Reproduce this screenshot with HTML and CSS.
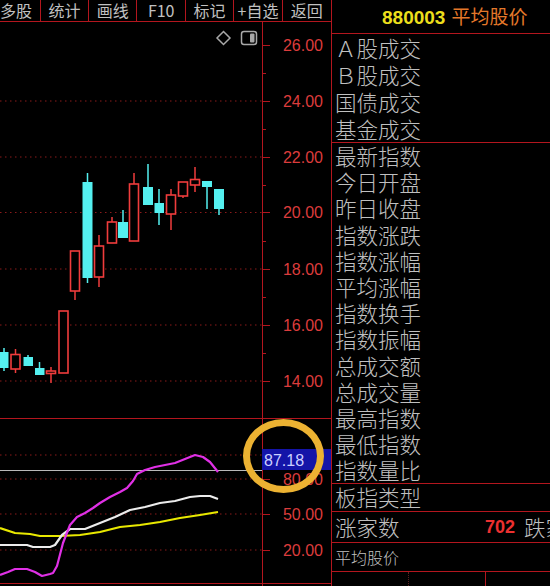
FILE: index.html
```html
<!DOCTYPE html>
<html lang="zh">
<head>
<meta charset="utf-8">
<title>880003 平均股价</title>
<link rel="stylesheet" href="styles.css">
</head>
<body>
<div class="screen">
  <div class="left">
    <div class="toolbar">
      <div class="tb">多股</div>
      <div class="tb">统计</div>
      <div class="tb">画线</div>
      <div class="tb">F10</div>
      <div class="tb">标记</div>
      <div class="tb">+自选</div>
      <div class="tb last">返回</div>
    </div>
    <div class="chart">
      <svg class="plot" width="331" height="564" viewBox="0 22 331 564" xmlns="http://www.w3.org/2000/svg">
        <g class="grid">
          <line x1="0" y1="101" x2="262" y2="101"/>
          <line x1="0" y1="157" x2="262" y2="157"/>
          <line x1="0" y1="212.5" x2="262" y2="212.5"/>
          <line x1="0" y1="269" x2="262" y2="269"/>
          <line x1="0" y1="325" x2="262" y2="325"/>
          <line x1="0" y1="381" x2="262" y2="381"/>
          <line x1="0" y1="455" x2="262" y2="455"/>
          <line x1="0" y1="479" x2="262" y2="479"/>
          <line x1="0" y1="514" x2="262" y2="514"/>
          <line x1="0" y1="550" x2="262" y2="550"/>
        </g>
        <line class="ref" x1="0" y1="470.5" x2="262" y2="470.5"/>
        <g class="frame">
          <line x1="262.5" y1="22" x2="262.5" y2="586"/>
          <line x1="0" y1="418.5" x2="331" y2="418.5"/>
          <line x1="0" y1="583.5" x2="331" y2="583.5"/>
        </g>
        <g class="frame">
          <line x1="262" y1="45.5" x2="270" y2="45.5"/>
          <line x1="262" y1="73.5" x2="266" y2="73.5"/>
          <line x1="262" y1="101.5" x2="270" y2="101.5"/>
          <line x1="262" y1="129.5" x2="266" y2="129.5"/>
          <line x1="262" y1="157.5" x2="270" y2="157.5"/>
          <line x1="262" y1="185.5" x2="266" y2="185.5"/>
          <line x1="262" y1="212.5" x2="270" y2="212.5"/>
          <line x1="262" y1="241.5" x2="266" y2="241.5"/>
          <line x1="262" y1="269.5" x2="270" y2="269.5"/>
          <line x1="262" y1="297.5" x2="266" y2="297.5"/>
          <line x1="262" y1="325.5" x2="270" y2="325.5"/>
          <line x1="262" y1="353.5" x2="266" y2="353.5"/>
          <line x1="262" y1="381.5" x2="270" y2="381.5"/>
          <line x1="262" y1="479.5" x2="270" y2="479.5"/>
          <line x1="262" y1="514.5" x2="270" y2="514.5"/>
          <line x1="262" y1="550.5" x2="270" y2="550.5"/>
        </g>
        <g class="axis">
          <text x="323" y="51">26.00</text>
          <text x="323" y="107">24.00</text>
          <text x="323" y="163">22.00</text>
          <text x="323" y="218">20.00</text>
          <text x="323" y="275">18.00</text>
          <text x="323" y="331">16.00</text>
          <text x="323" y="387">14.00</text>
          <text x="323" y="485">80.00</text>
          <text x="323" y="520">50.00</text>
          <text x="323" y="556">20.00</text>
        </g>
        <rect class="valbox" x="262" y="449" width="69" height="21"/>
        <text class="valtxt" x="264" y="465.5">87.18</text>
        <path class="icon" d="M223.5 31.5 L230 38 L223.5 44.5 L217 38 Z"/>
        <rect class="icon" x="241.5" y="31.5" width="15" height="13" rx="2.5"/>
        <rect class="iconfill" x="250" y="33.5" width="4.5" height="9" rx="1"/>
        <g class="down">
          <line x1="4" y1="348" x2="4" y2="371"/><rect x="0" y="352" width="8.5" height="16"/>
          <line x1="28" y1="355" x2="28" y2="366"/><rect x="23.5" y="357" width="9.5" height="9"/>
          <line x1="39.5" y1="362" x2="39.5" y2="375"/><rect x="35" y="368" width="9.5" height="7"/>
          <line x1="87.5" y1="173" x2="87.5" y2="283"/><rect x="82.5" y="182" width="10" height="96"/>
          <line x1="123" y1="210" x2="123" y2="238"/><rect x="118" y="222" width="10" height="16"/>
          <line x1="148" y1="164" x2="148" y2="205"/><rect x="143" y="187" width="10" height="18"/>
          <line x1="159" y1="189" x2="159" y2="225"/><rect x="154.5" y="203" width="9.5" height="10"/>
          <line x1="207" y1="181" x2="207" y2="209"/><rect x="202" y="181" width="10" height="6"/>
          <line x1="219" y1="189" x2="219" y2="215"/><rect x="214" y="189" width="10" height="20"/>
        </g>
        <g class="upw">
          <line x1="15.5" y1="349" x2="15.5" y2="354"/><line x1="15.5" y1="369" x2="15.5" y2="373"/>
          <line x1="51" y1="367" x2="51" y2="383"/>
          <line x1="75" y1="291" x2="75" y2="300"/>
          <line x1="99" y1="235" x2="99" y2="246"/><line x1="99" y1="277" x2="99" y2="287"/>
          <line x1="112" y1="217" x2="112" y2="222"/>
          <line x1="134" y1="173" x2="134" y2="184"/>
          <line x1="171" y1="189" x2="171" y2="195"/><line x1="171" y1="214" x2="171" y2="230"/>
          <line x1="183" y1="196" x2="183" y2="198"/>
          <line x1="195" y1="167" x2="195" y2="179"/><line x1="195" y1="185" x2="195" y2="192"/>
        </g>
        <g class="up">
          <rect x="11" y="354.5" width="9" height="14.5"/>
          <rect x="46.5" y="371" width="9" height="2.5"/>
          <rect x="59" y="311" width="9" height="62"/>
          <rect x="70.5" y="251" width="9" height="40"/>
          <rect x="94.5" y="246" width="9" height="31"/>
          <rect x="107.5" y="222" width="9" height="21"/>
          <rect x="129.5" y="184" width="9" height="57"/>
          <rect x="166.5" y="195" width="9" height="19"/>
          <rect x="178.5" y="182" width="9" height="14"/>
          <rect x="190.5" y="179.5" width="9" height="5.5"/>
        </g>
        <polyline class="l-yel" points="0,528 15,533 30,534 40,536 60,536 80,535 100,532 120,527 140,525 160,522 180,518 200,515 218,512"/>
        <polyline class="l-wht" points="0,545 27,545 33,547 50,547 55,545 62,535 70,529 85,529 100,523 115,517 130,510 145,507 160,503 175,501 190,497 200,496 210,496 218,499"/>
        <polyline class="l-mag" points="0,575 8,572 15,569 27,569 35,572 42,576 50,574 53,573 57,566 63,543 70,525 77,517 85,513 93,508 100,503 110,497 120,492 127,488 133,481 137,474 145,470 155,467 165,465 175,463 185,459 195,455 203,457 210,462 218,472"/>
      </svg>
    </div>
  </div>
  <div class="right">
    <div class="hdr"><span class="code">880003</span><span class="name">平均股价</span></div>
    <div class="sec s1">
      <div class="row">Ａ股成交</div>
      <div class="row">Ｂ股成交</div>
      <div class="row">国债成交</div>
      <div class="row">基金成交</div>
    </div>
    <div class="sec s2">
      <div class="row">最新指数</div>
      <div class="row">今日开盘</div>
      <div class="row">昨日收盘</div>
      <div class="row">指数涨跌</div>
      <div class="row">指数涨幅</div>
      <div class="row">平均涨幅</div>
      <div class="row">指数换手</div>
      <div class="row">指数振幅</div>
      <div class="row">总成交额</div>
      <div class="row">总成交量</div>
      <div class="row">最高指数</div>
      <div class="row">最低指数</div>
      <div class="row">指数量比</div>
    </div>
    <div class="sec s3"><div class="row">板指类型</div></div>
    <div class="sec s4"><span class="lbl">涨家数</span><span class="upn">702</span><span class="lbl">跌家数</span></div>
    <div class="sec s5">平均股价</div>
    <div class="cells"><div class="c1"></div><div class="c2"></div><div class="c3"></div></div>
  </div>
  <div class="ring"></div>
</div>
</body>
</html>
```

FILE: styles.css
```css
html, body {
  margin: 0;
  padding: 0;
  background: #000;
}
.screen {
  position: relative;
  display: flex;
  width: 550px;
  height: 586px;
  overflow: hidden;
  background: #000;
  font-family: "Noto Sans CJK SC", "Liberation Sans", sans-serif;
  color: #c0c0c0;
}
.left {
  width: 331px;
  flex: none;
  display: flex;
  flex-direction: column;
  border-right: 1px solid #b3161e;
  overflow: hidden;
}
.toolbar {
  display: flex;
  height: 21px;
  margin-left: -7.7px;
  border-bottom: 1px solid #b3161e;
  flex: none;
}
.tb {
  width: 48.4px;
  flex: none;
  box-sizing: border-box;
  border-right: 1px solid #b3161e;
  text-align: center;
  font-size: 16px;
  line-height: 21px;
  color: #c0c0c0;
  white-space: nowrap;
}
.tb.last {
  border-right: none;
}
.chart {
  flex: 1;
}
.plot {
  display: block;
}
.grid line {
  stroke: #8a1a1a;
  stroke-width: 1;
  stroke-dasharray: 1.5 3.5;
}
.ref {
  stroke: #b8b8b8;
  stroke-width: 1;
}
.frame line {
  stroke: #b3161e;
  stroke-width: 1;
}
.axis text {
  font-family: "Liberation Sans", sans-serif;
  font-size: 16px;
  fill: #dc3c3c;
  text-anchor: end;
}
.valbox {
  fill: #1414a8;
}
.valtxt {
  font-family: "Liberation Sans", sans-serif;
  font-size: 16px;
  fill: #ccd0ff;
}
.icon {
  fill: none;
  stroke: #a8a8a8;
  stroke-width: 1.5;
}
.iconfill {
  fill: #a8a8a8;
}
.down line {
  stroke: #54f0f0;
  stroke-width: 1.5;
}
.down rect {
  fill: #54f0f0;
}
.upw line {
  stroke: #f03c3c;
  stroke-width: 1.5;
}
.up rect {
  fill: #000;
  stroke: #f03c3c;
  stroke-width: 1.6;
}
.l-yel, .l-wht, .l-mag {
  fill: none;
  stroke-width: 2.2;
  stroke-linejoin: round;
}
.l-yel { stroke: #e8e800; }
.l-wht { stroke: #ececec; }
.l-mag { stroke: #e030e6; }

.right {
  flex: 1;
  display: flex;
  flex-direction: column;
}
.hdr {
  height: 33px;
  line-height: 31px;
  border-bottom: 1px solid #b3161e;
  padding-left: 50px;
  white-space: nowrap;
}
.code {
  font-family: "Liberation Sans", sans-serif;
  font-weight: bold;
  font-size: 19px;
  color: #ecdf1c;
  margin-right: 6px;
}
.name {
  font-size: 19px;
  color: #e4782a;
}
.sec {
  border-bottom: 1px solid #b3161e;
  padding-left: 3px;
  font-size: 21.5px;
  font-weight: 300;
  white-space: nowrap;
}
.s1 .row {
  height: 27px;
  line-height: 27px;
}
.s2 .row {
  height: 26.2px;
  line-height: 26.2px;
}
.s3 .row {
  height: 26.5px;
  line-height: 26.5px;
}
.s4 {
  height: 30px;
  line-height: 30px;
  display: grid;
  grid-template-columns: 150px auto auto;
  justify-content: start;
}
.upn {
  font-family: "Liberation Sans", sans-serif;
  font-weight: bold;
  font-size: 18px;
  color: #ec3030;
  margin-right: 9px;
}
.s5 {
  height: 28px;
  line-height: 28px;
  font-size: 16px;
}
.cells {
  flex: 1;
  display: grid;
  grid-template-columns: 77px 77px 1fr;
}
.c1 {
  border-right: 1px dotted #5a2020;
}
.c2 {
  border-right: 1px solid #b3161e;
}
.ring {
  position: absolute;
  left: 243px;
  top: 419px;
  width: 81px;
  height: 74px;
  box-sizing: border-box;
  border: 7px solid #ecb232;
  border-radius: 50%;
}
```
